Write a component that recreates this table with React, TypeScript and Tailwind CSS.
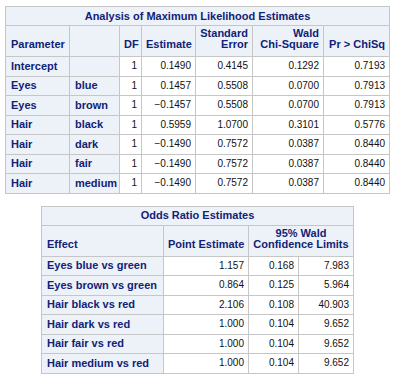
import React from "react";

type Row1 = { p: string; l: string; df: string; est: string; se: string; chi: string; pr: string };

const mle: Row1[] = [
  { p: "Intercept", l: "", df: "1", est: "0.1490", se: "0.4145", chi: "0.1292", pr: "0.7193" },
  { p: "Eyes", l: "blue", df: "1", est: "0.1457", se: "0.5508", chi: "0.0700", pr: "0.7913" },
  { p: "Eyes", l: "brown", df: "1", est: "-0.1457", se: "0.5508", chi: "0.0700", pr: "0.7913" },
  { p: "Hair", l: "black", df: "1", est: "0.5959", se: "1.0700", chi: "0.3101", pr: "0.5776" },
  { p: "Hair", l: "dark", df: "1", est: "-0.1490", se: "0.7572", chi: "0.0387", pr: "0.8440" },
  { p: "Hair", l: "fair", df: "1", est: "-0.1490", se: "0.7572", chi: "0.0387", pr: "0.8440" },
  { p: "Hair", l: "medium", df: "1", est: "-0.1490", se: "0.7572", chi: "0.0387", pr: "0.8440" },
];

const odds = [
  { e: "Eyes blue vs green", pt: "1.157", lo: "0.168", hi: "7.983" },
  { e: "Eyes brown vs green", pt: "0.864", lo: "0.125", hi: "5.964" },
  { e: "Hair black vs red", pt: "2.106", lo: "0.108", hi: "40.903" },
  { e: "Hair dark vs red", pt: "1.000", lo: "0.104", hi: "9.652" },
  { e: "Hair fair vs red", pt: "1.000", lo: "0.104", hi: "9.652" },
  { e: "Hair medium vs red", pt: "1.000", lo: "0.104", hi: "9.652" },
];

const hd = "border border-[#c6c6c6] bg-[#edf2f9] text-[#112277] font-bold text-[11px] leading-[11px] whitespace-nowrap";
const hdBottom = `${hd} align-bottom pb-[6px] px-[4px]`;
const rowHd = `${hd} text-left px-[5px] h-[19.5px] align-middle`;
const cell = "border border-[#c6c6c6] bg-white text-[#111] text-[10px] leading-[10px] text-right pr-[4px] pl-[2px] h-[19.5px] align-middle whitespace-nowrap";

const App = () => {
  return (
    <div className="w-[395px] h-[379px] bg-white pt-[6px] flex flex-col items-center gap-[12px]" style={{ fontFamily: '"Liberation Sans", Arial, sans-serif' }}>
      <table className="border-collapse table-fixed w-[384px]">
        <colgroup>
          <col className="w-[64px]" />
          <col className="w-[50px]" />
          <col className="w-[22px]" />
          <col className="w-[54px]" />
          <col className="w-[57px]" />
          <col className="w-[71px]" />
          <col className="w-[66px]" />
        </colgroup>
        <thead>
          <tr>
            <th colSpan={7} className={`${hd} h-[19px] text-center align-middle`}>
              Analysis of Maximum Likelihood Estimates
            </th>
          </tr>
          <tr className="h-[31px]">
            <th className={`${hdBottom} text-left !pl-[5px]`}>Parameter</th>
            <th className={`${hdBottom} text-left`}></th>
            <th className={`${hdBottom} text-right`}>DF</th>
            <th className={`${hdBottom} text-right`}>Estimate</th>
            <th className={`${hdBottom} text-right`}>Standard<br />Error</th>
            <th className={`${hdBottom} text-right`}>Wald<br />Chi-Square</th>
            <th className={`${hdBottom} text-right`}>Pr &gt; ChiSq</th>
          </tr>
        </thead>
        <tbody>
          {mle.map((r, i) => (
            <tr key={i}>
              <th className={rowHd}>{r.p}</th>
              <th className={rowHd}>{r.l}</th>
              <td className={cell}>{r.df}</td>
              <td className={cell}>{r.est.replace("-", "\u2212")}</td>
              <td className={cell}>{r.se}</td>
              <td className={cell}>{r.chi}</td>
              <td className={cell}>{r.pr}</td>
            </tr>
          ))}
        </tbody>
      </table>

      <table className="border-collapse table-fixed w-[312px]">
        <colgroup>
          <col className="w-[122px]" />
          <col className="w-[85px]" />
          <col className="w-[50px]" />
          <col className="w-[55px]" />
        </colgroup>
        <thead>
          <tr>
            <th colSpan={4} className={`${hd} h-[19px] text-center align-middle`}>
              Odds Ratio Estimates
            </th>
          </tr>
          <tr className="h-[31px]">
            <th className={`${hdBottom} text-left !pl-[5px]`}>Effect</th>
            <th className={`${hdBottom} text-right`}>Point Estimate</th>
            <th colSpan={2} className={`${hdBottom} text-center`}>95% Wald<br />Confidence Limits</th>
          </tr>
        </thead>
        <tbody>
          {odds.map((r, i) => (
            <tr key={i}>
              <th className={rowHd}>{r.e}</th>
              <td className={cell}>{r.pt}</td>
              <td className={cell}>{r.lo}</td>
              <td className={cell}>{r.hi}</td>
            </tr>
          ))}
        </tbody>
      </table>
    </div>
  );
};

export default App;
